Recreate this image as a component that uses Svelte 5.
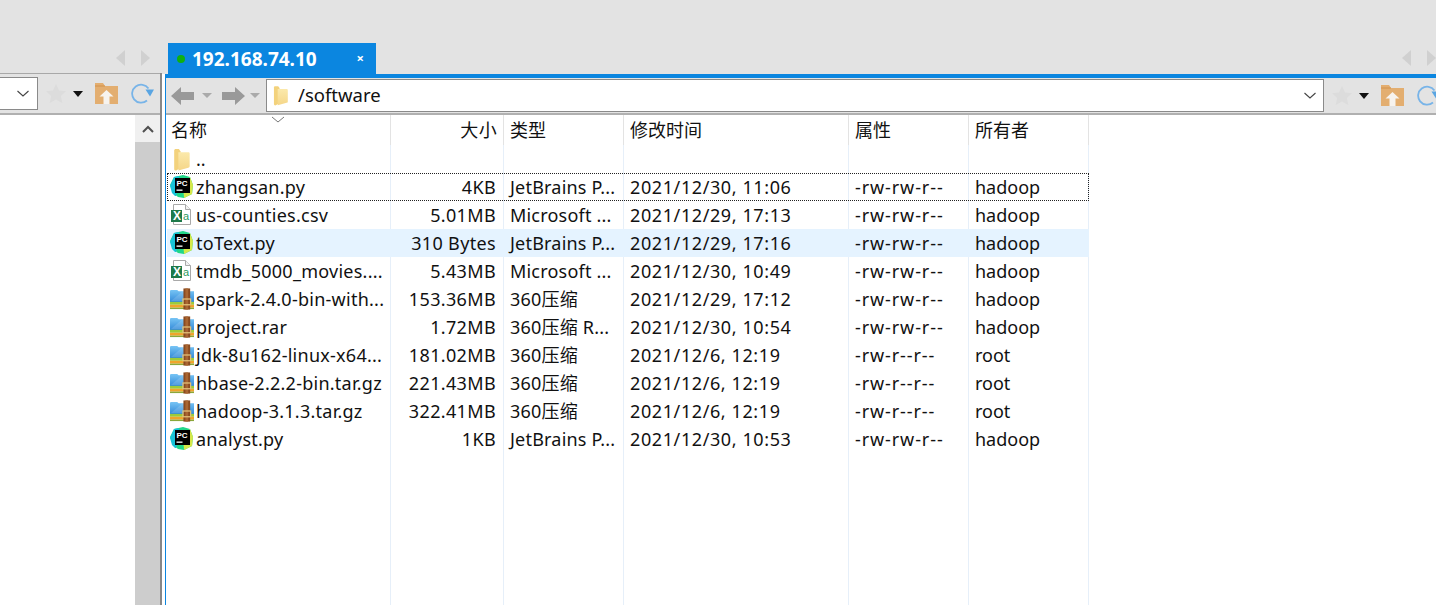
<script lang="ts">
  type Kind = 'pc' | 'xls' | 'zip';

  const files: { name: string; size: string; type: string; time: string; attr: string; owner: string; kind: Kind; state?: string }[] = [
    { name: 'zhangsan.py', size: '4KB', type: 'JetBrains P...', time: '2021/12/30, 11:06', attr: '-rw-rw-r--', owner: 'hadoop', kind: 'pc', state: 'focused' },
    { name: 'us-counties.csv', size: '5.01MB', type: 'Microsoft ...', time: '2021/12/29, 17:13', attr: '-rw-rw-r--', owner: 'hadoop', kind: 'xls' },
    { name: 'toText.py', size: '310 Bytes', type: 'JetBrains P...', time: '2021/12/29, 17:16', attr: '-rw-rw-r--', owner: 'hadoop', kind: 'pc', state: 'hover' },
    { name: 'tmdb_5000_movies....', size: '5.43MB', type: 'Microsoft ...', time: '2021/12/30, 10:49', attr: '-rw-rw-r--', owner: 'hadoop', kind: 'xls' },
    { name: 'spark-2.4.0-bin-with...', size: '153.36MB', type: '360压缩', time: '2021/12/29, 17:12', attr: '-rw-rw-r--', owner: 'hadoop', kind: 'zip' },
    { name: 'project.rar', size: '1.72MB', type: '360压缩 R...', time: '2021/12/30, 10:54', attr: '-rw-rw-r--', owner: 'hadoop', kind: 'zip' },
    { name: 'jdk-8u162-linux-x64...', size: '181.02MB', type: '360压缩', time: '2021/12/6, 12:19', attr: '-rw-r--r--', owner: 'root', kind: 'zip' },
    { name: 'hbase-2.2.2-bin.tar.gz', size: '221.43MB', type: '360压缩', time: '2021/12/6, 12:19', attr: '-rw-r--r--', owner: 'root', kind: 'zip' },
    { name: 'hadoop-3.1.3.tar.gz', size: '322.41MB', type: '360压缩', time: '2021/12/6, 12:19', attr: '-rw-r--r--', owner: 'root', kind: 'zip' },
    { name: 'analyst.py', size: '1KB', type: 'JetBrains P...', time: '2021/12/30, 10:53', attr: '-rw-rw-r--', owner: 'hadoop', kind: 'pc' },
  ];
</script>

{#snippet tabNav()}
  <svg class="tab-nav" width="34" height="16" viewBox="0 0 34 16">
    <path d="M9 0v16L0 8z" fill="#d0d0d0" />
    <path d="M25 0v16l9-8z" fill="#d0d0d0" />
  </svg>
{/snippet}

{#snippet chevron()}
  <svg class="chev" width="12" height="7" viewBox="0 0 12 7">
    <path d="M.5 1l5.500 5L11.500 1" fill="none" stroke="#444" stroke-width="1.100" />
  </svg>
{/snippet}

{#snippet folder(w: number, h: number)}
  <svg width={w} height={h} viewBox="0 0 16 22">
    <path d="M1 2.500C1 1.500 1.600 1 2.500 1H5.500L7 3V19L3 21.500C1.800 21.800 1 21 1 20z" fill="#f3d27c" />
    <path d="M5 4H14.500C15.300 4 15.800 4.500 15.800 5.300V17.500C15.800 18.300 15.300 18.800 14.500 18.800L5 21.500z" fill="url(#fold)" />
  </svg>
{/snippet}

{#snippet quickTools()}
  <div class="quick">
    <svg class="star" width="22" height="21" viewBox="0 0 22 21">
      <path d="M11 1l3 6.500 7 .8-5.200 4.700 1.500 7L11 16.500 4.700 20l1.500-7L1 8.300l7-.8z" fill="#dcdcdc" />
    </svg>
    <svg class="caret" width="10" height="6" viewBox="0 0 10 6"><path d="M0 0h10L5 6z" fill="#111" /></svg>
    <svg class="home" width="23" height="21" viewBox="0 0 23 21">
      <path d="M0 0h8l2 3h13v18H0z" fill="#e3ae70" />
      <path d="M0 3h10" stroke="#d2924c" stroke-width="1" />
      <path d="M11.500 7l7 6.500h-4V21h-6v-7.500h-4z" fill="#f7f3ee" />
    </svg>
    <svg class="refresh" width="26" height="24" viewBox="0 0 26 24">
      <path d="M16 18.500A9 9 0 1 1 17.500 6.500" fill="none" stroke="#78b4e8" stroke-width="1.800" />
      <path d="M14.500 7.500h8.500l-4 7z" fill="#5aa5e2" />
    </svg>
  </div>
{/snippet}

{#snippet pcIcon()}
  <svg width="24" height="24" viewBox="0 0 24 24">
    <path d="M4 2l9-2 7 2 3 8-1 9-8 4-6-1-5-4-3-8z" fill="#21d789" />
    <path d="M13 9l7-7 3 8-1 9-8 4z" fill="#d7e84a" />
    <path d="M0 11L4 2l5-1 1 8-4 12-1 0-3-3z" fill="#19c3d8" />
    <rect x="5" y="3" width="15" height="15" fill="#000" />
    <text x="6.500" y="10.500" class="pc-text">PC</text>
    <rect x="6.500" y="14.500" width="6" height="1.300" fill="#fff" />
  </svg>
{/snippet}

{#snippet xlsIcon()}
  <svg width="24" height="22" viewBox="0 0 24 22">
    <path d="M3.500 .5h12l5 5v15h-17z" fill="#fff" stroke="#a9a9a9" />
    <path d="M15.500 .5v5h5" fill="#f2f2f2" stroke="#a9a9a9" />
    <rect x="1" y="6" width="11" height="12" fill="#1d7a4a" />
    <text x="3" y="15.800" class="x-text">X</text>
    <text x="13" y="15.800" class="a-text">a</text>
  </svg>
{/snippet}

{#snippet zipIcon()}
  <svg width="25" height="22" viewBox="0 0 25 22">
    <path d="M0 3c0-1 .6-1.500 1.500-1.500h6L9 3h16v12H0z" fill="url(#zipblue)" />
    <path d="M1 13L13 3h4v10z" fill="#fff" opacity=".14" />
    <rect x="0" y="14" width="25" height="3" fill="#9ccb3b" />
    <rect x="0" y="17" width="25" height="3" fill="#f0a42b" />
    <rect x="0" y="20" width="25" height="1.500" fill="#8aa83a" />
    <rect x="14" y="0" width="7" height="22" fill="#8a4a1f" />
    <rect x="16" y="0" width="3" height="22" fill="#a96632" />
    <rect x="13.500" y="11" width="8" height="6" fill="none" stroke="#e4c27a" stroke-width="1.300" />
  </svg>
{/snippet}

<svg class="defs" width="0" height="0">
  <defs>
    <linearGradient id="fold" x1="0" y1="0" x2="0" y2="1">
      <stop offset="0" stop-color="#fbe9ab" />
      <stop offset="1" stop-color="#f5d688" />
    </linearGradient>
    <linearGradient id="zipblue" x1="0" y1="0" x2="0" y2="1">
      <stop offset="0" stop-color="#78c5f5" />
      <stop offset="1" stop-color="#2f86d6" />
    </linearGradient>
  </defs>
</svg>

<div class="window">
  <header class="tabstrip">
    <div class="strip-left">{@render tabNav()}</div>
    <div class="tab">
      <span class="dot"></span>
      <span class="tab-title">192.168.74.10</span>
      <span class="tab-close">×</span>
    </div>
    <div class="strip-right">{@render tabNav()}</div>
  </header>

  <div class="panes">
    <section class="local">
      <div class="toolbar local-bar">
        <div class="combo local-combo">{@render chevron()}</div>
        {@render quickTools()}
      </div>
      <div class="local-body">
        <div class="tree"></div>
        <div class="scrollbar">
          <div class="scroll-btn">
            <svg width="12" height="8" viewBox="0 0 12 8"><path d="M1 7l5-5 5 5" fill="none" stroke="#505050" stroke-width="2" /></svg>
          </div>
          <div class="scroll-thumb"></div>
        </div>
      </div>
    </section>

    <div class="splitter"></div>

    <section class="remote">
      <div class="blue-line"></div>
      <div class="toolbar remote-bar">
        <div class="history">
          <svg width="24" height="20" viewBox="0 0 24 20"><path d="M0 10L10 1v5h13v8H10v5z" fill="#999" /></svg>
          <svg class="hist-caret" width="10" height="5" viewBox="0 0 10 5"><path d="M0 0h10L5 5z" fill="#aaa" /></svg>
          <svg class="fwd" width="24" height="20" viewBox="0 0 24 20"><path d="M24 10L14 1v5H1v8h13v5z" fill="#999" /></svg>
          <svg class="hist-caret last" width="10" height="5" viewBox="0 0 10 5"><path d="M0 0h10L5 5z" fill="#aaa" /></svg>
        </div>
        <div class="combo address">
          {@render folder(15, 21)}
          <span class="path">/software</span>
          {@render chevron()}
        </div>
        {@render quickTools()}
      </div>

      <div class="listing">
        <div class="lines">
          {#each Array(6) as _}<div></div>{/each}
        </div>
        <div class="row head">
          <div class="name">名称</div>
          <div class="size">大小</div>
          <div>类型</div>
          <div>修改时间</div>
          <div>属性</div>
          <div>所有者</div>
        </div>
        <svg class="sort" width="14" height="7" viewBox="0 0 14 7"><path d="M1 1l6 5 6-5" fill="none" stroke="#777" /></svg>
        <div class="row">
          <div class="name updir">{@render folder(17, 23)}<span>..</span></div>
        </div>
        {#each files as f}
          <div class="row {f.state ?? ''}">
            <div class="name">
              <span class="ico">
                {#if f.kind === 'pc'}{@render pcIcon()}{:else if f.kind === 'xls'}{@render xlsIcon()}{:else}{@render zipIcon()}{/if}
              </span>
              <span class="fname">{f.name}</span>
            </div>
            <div class="size">{f.size}</div>
            <div class="cell type">{f.type}</div>
            <div class="cell time">{f.time}</div>
            <div class="cell attr">{f.attr}</div>
            <div class="cell">{f.owner}</div>
          </div>
        {/each}
      </div>
    </section>
  </div>
</div>

<style>
  :global(body) {
    background: #fff;
    overflow: hidden;
  }

  .defs {
    position: absolute;
  }

  .window {
    height: 605px;
    display: flex;
    flex-direction: column;
    overflow: hidden;
    font-family: "Noto Sans", "Noto Sans CJK SC", sans-serif;
    font-size: 18px;
    color: #111;
  }

  /* tab strip */
  .tabstrip {
    height: 74px;
    flex: none;
    display: flex;
    align-items: flex-end;
    background: #e3e3e3;
  }

  .strip-left {
    width: 168px;
    display: flex;
    justify-content: flex-end;
    padding: 0 18px 8px 0;
    box-sizing: border-box;
  }

  .strip-right {
    flex: 1;
    display: flex;
    justify-content: flex-end;
    padding-bottom: 8px;
  }

  .tab-nav {
    display: block;
  }

  .tab {
    width: 208px;
    height: 31px;
    box-sizing: border-box;
    padding: 0 12px 0 9px;
    display: flex;
    align-items: center;
    background: #0b86e0;
    color: #fff;
  }

  .dot {
    width: 8px;
    height: 8px;
    border-radius: 50%;
    background: #10b010;
    margin-right: 7px;
    flex: none;
  }

  .tab-title {
    font-weight: 700;
    font-size: 19px;
    flex: 1;
  }

  .tab-close {
    font-size: 13px;
    font-weight: 700;
    line-height: 1;
  }

  /* panes */
  .panes {
    flex: 1;
    min-height: 0;
    display: flex;
  }

  .local {
    width: 160px;
    flex: none;
    display: flex;
    flex-direction: column;
    border-top: 1px solid #a8a8a8;
    margin-top: -1px;
    overflow: hidden;
  }

  .splitter {
    width: 2px;
    flex: none;
    background: #888;
    margin-top: -1px;
    margin-right: 3px;
  }

  .remote {
    flex: 1;
    min-width: 0;
    display: flex;
    flex-direction: column;
    border-left: 1px solid #0b86e0;
    overflow: hidden;
  }

  .blue-line {
    height: 4px;
    flex: none;
    background: #0b86e0;
  }

  .toolbar {
    flex: none;
    display: flex;
    align-items: center;
    background: #e3e3e3;
    border-bottom: 2px solid #b0b0b0;
    box-sizing: border-box;
  }

  .local-bar {
    height: 41px;
  }

  .remote-bar {
    height: 37px;
    padding-left: 5px;
    width: 1320px;
  }

  .combo {
    height: 33px;
    box-sizing: border-box;
    background: #fff;
    border: 1px solid #8a8a8a;
    display: flex;
    align-items: center;
    flex: none;
  }

  .local-combo {
    width: 38px;
    border-left: 0;
    justify-content: flex-end;
    padding-right: 8px;
  }

  .address {
    width: 1058px;
    padding: 0 7px 0 6px;
    gap: 10px;
  }

  .path {
    flex: 1;
    font-size: 18.500px;
    margin-top: -2px;
  }

  .chev {
    flex: none;
  }

  .quick {
    flex: none;
    display: flex;
    align-items: center;
    margin-left: 7px;
  }

  .caret {
    margin-left: 6px;
  }

  .home {
    margin-left: 12px;
  }

  .refresh {
    margin-left: 13px;
  }

  .history {
    width: 95px;
    flex: none;
    display: flex;
    align-items: center;
  }

  .hist-caret {
    margin-left: 7px;
  }

  .hist-caret.last {
    margin-left: 5px;
  }

  .fwd {
    margin-left: 9px;
  }

  /* left pane body */
  .local-body {
    flex: 1;
    min-height: 0;
    display: flex;
  }

  .tree {
    flex: 1;
    background: #fff;
  }

  .scrollbar {
    width: 25px;
    flex: none;
    display: flex;
    flex-direction: column;
    background: #f0f0f0;
  }

  .scroll-btn {
    height: 27px;
    display: flex;
    align-items: center;
    justify-content: center;
  }

  .scroll-thumb {
    flex: 1;
    background: #cdcdcd;
  }

  /* file list */
  .listing {
    flex: 1;
    min-height: 0;
    position: relative;
    padding-left: 1px;
  }

  .lines {
    position: absolute;
    inset: 0 auto 0 1px;
    display: grid;
    grid-template-columns: 224px 113px 120px 225px 120px 120px;
  }

  .lines div {
    border-right: 1px solid #e6eff9;
  }

  .row {
    position: relative;
    display: grid;
    grid-template-columns: 224px 113px 120px 225px 120px 120px;
    width: 922px;
    height: 28px;
    line-height: 28px;
    white-space: nowrap;
  }

  .head {
    height: 30px;
    line-height: 30px;
    border-right: 1px solid #e3e3e3;
    box-sizing: content-box;
    width: 921px;
  }

  .head div {
    border-right: 1px solid #e3e3e3;
    padding-left: 6px;
  }

  .head div:last-child {
    border-right: 0;
  }

  .head .name {
    padding-left: 4px;
  }

  .head .size {
    text-align: right;
    padding: 0 6px 0 0;
  }

  .sort {
    position: absolute;
    left: 105px;
    top: 1px;
  }

  .name {
    display: flex;
    align-items: center;
    gap: 2px;
    padding-left: 3px;
    overflow: hidden;
  }

  .updir {
    padding-left: 6px;
    gap: 6px;
  }

  .ico {
    display: flex;
    width: 24px;
    flex: none;
  }

  .fname {
    letter-spacing: .25px;
  }

  .size {
    text-align: right;
    padding-right: 8px;
    letter-spacing: .35px;
  }

  .cell {
    padding-left: 6px;
  }

  .type {
    letter-spacing: .2px;
  }

  .time {
    letter-spacing: .6px;
  }

  .attr {
    letter-spacing: .9px;
  }

  .hover {
    background: #e5f3ff;
  }

  .focused {
    outline: 1px dotted #222;
    outline-offset: -1px;
  }

  .pc-text {
    font-family: "Liberation Sans", sans-serif;
    font-size: 8px;
    font-weight: 700;
    fill: #fff;
  }

  .x-text {
    font-family: "Liberation Sans", sans-serif;
    font-size: 12px;
    font-weight: 700;
    fill: #fff;
  }

  .a-text {
    font-family: "Liberation Sans", sans-serif;
    font-size: 11px;
    fill: #2a9a60;
  }
</style>
